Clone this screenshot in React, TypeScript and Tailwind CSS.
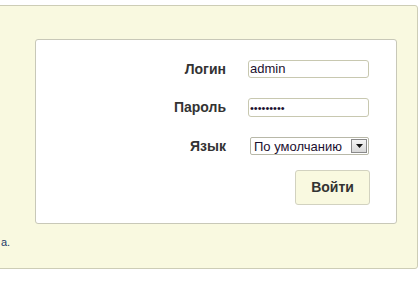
import React from 'react';

const App = () => {
  return (
    <div className="bg-white w-[420px] h-[291px] overflow-hidden pt-[5px] font-['Liberation_Sans',Arial,sans-serif]">
      {/* Outer panel */}
      <div className="-ml-[10px] w-[428px] h-[264px] bg-[#f9f9e0] border border-[#cdcdb6] rounded-[3px] pt-[33px] pl-[44px]">

        {/* Login box */}
        <div className="w-[362px] h-[185px] bg-white border border-[#c8c8b8] rounded-[3px] pt-[20px]">
          <div className="flex items-center h-[18px]">
            <label className="w-[190px] text-right text-[14px] font-bold text-[#333]">Логин</label>
            <input
              type="text"
              readOnly
              value="admin"
              className="ml-[22px] w-[121px] h-[18px] border border-[#c8c8b0] rounded-[3px] pl-[1px] text-[13px] text-[#1b1030] outline-none"
            />
          </div>

          <div className="flex items-center h-[19px] mt-[20px]">
            <label className="w-[190px] text-right text-[14px] font-bold text-[#333]">Пароль</label>
            <input
              type="text"
              readOnly
              value="•••••••••"
              className="ml-[22px] w-[121px] h-[19px] border border-[#c8c8b0] rounded-[3px] pl-[1px] text-[11px] text-[#1b1030] outline-none"
            />
          </div>

          <div className="flex items-center h-[18px] mt-[20px]">
            <label className="w-[190px] text-right text-[14px] font-bold text-[#333]">Язык</label>
            <div className="ml-[24px] w-[119px] h-[18px] border border-[#b8b8a8] rounded-[2px] flex items-center justify-between pl-[3px] pr-[1px]">
              <span className="text-[13px] text-[#1b1030] leading-none">По умолчанию</span>
              <div className="w-[16px] h-[14px] border border-[#8a8a8a] bg-gradient-to-b from-[#f4f4f4] to-[#d8d8d8] flex items-center justify-center">
                <svg width="7" height="4" viewBox="0 0 7 4">
                  <path d="M0 0h7L3.5 4z" fill="#111" />
                </svg>
              </div>
            </div>
          </div>

          <div className="flex justify-end pr-[26px] mt-[15px]">
            <button className="w-[75px] h-[35px] bg-[#f9f9e0] border border-[#d2d2c0] rounded-[3px] text-[14px] font-bold text-[#333]">
              Войти
            </button>
          </div>
        </div>

        {/* Tail of a note below the box */}
        <div className="-ml-[34px] mt-[11px] text-[11px] leading-[14px] text-[#1f3a6a]">а.</div>
      </div>
    </div>
  );
};

export default App;
